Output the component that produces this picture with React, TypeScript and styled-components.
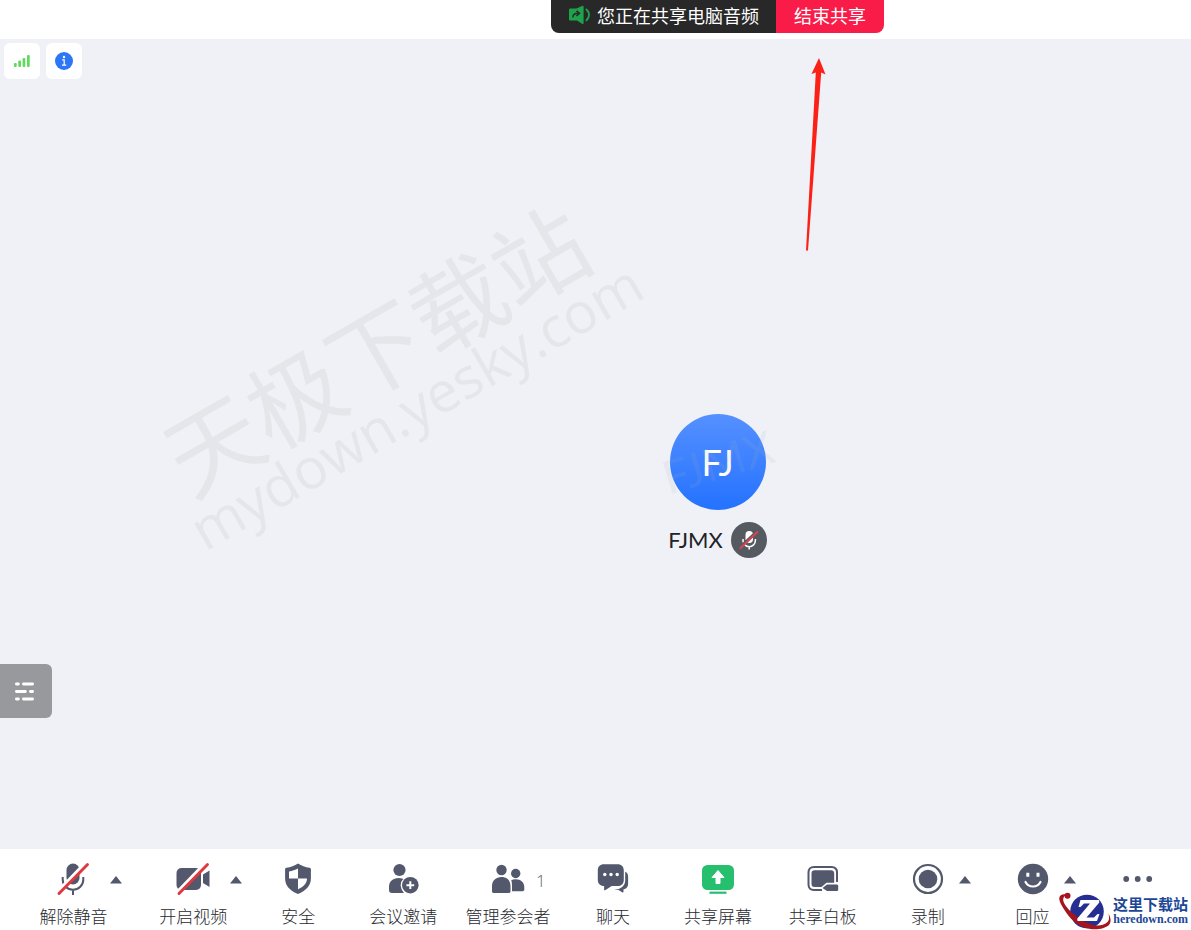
import React from "react";
import styled, { createGlobalStyle } from "styled-components";

const INK = "#53586d";

const GlobalStyle = createGlobalStyle`
  *, *::before, *::after { box-sizing: border-box; }
  body {
    margin: 0;
    overflow-x: hidden;
    background: #ffffff;
    font-family: "Open Sans", "Noto Sans CJK SC", sans-serif;
  }
  button {
    margin: 0;
    padding: 0;
    border: 0;
    background: none;
    font: inherit;
    color: inherit;
    cursor: pointer;
  }
  svg { display: block; }
`;

const Window = styled.div`
  position: relative;
  display: flex;
  flex-direction: column;
  min-height: 100vh;
`;

const Header = styled.header`
  display: flex;
  justify-content: center;
  align-items: flex-start;
  height: 39px;
  padding-left: 244px;
`;

const ShareBar = styled.div`
  display: flex;
  height: 33px;
  border-radius: 0 0 8px 8px;
  overflow: hidden;
  color: #ffffff;
  font-family: "Noto Sans CJK SC", sans-serif;
  font-size: 18px;
  line-height: 30px;
  white-space: nowrap;
`;

const ShareStatus = styled.div`
  display: flex;
  gap: 6px;
  padding: 0 17px 0 18px;
  background: #282828;

  svg { margin-top: 5px; }
`;

const StopButton = styled.button`
  && {
    display: flex;
    align-items: flex-start;
    padding: 0 18px;
    background: #f91c48;
    line-height: 30px;
  }
`;

const Stage = styled.main`
  position: relative;
  flex: 1;
  display: flex;
  flex-direction: column;
  background: #eff1f6;
`;

const StageTools = styled.div`
  display: flex;
  gap: 6px;
  padding: 4px 4px 0;
`;

const ToolButton = styled.button`
  && {
    display: grid;
    place-items: center;
    width: 36px;
    height: 36px;
    border-radius: 6px;
    background: #ffffff;
  }
`;

const Participants = styled.div`
  flex: 1;
  display: flex;
  justify-content: center;
  align-items: center;
  padding: 44px 0 0 244px;
`;

const Participant = styled.figure`
  display: flex;
  flex-direction: column;
  align-items: center;
  gap: 12px;
  margin: 0;
  font-family: Lato, "Noto Sans CJK SC", sans-serif;
`;

const Avatar = styled.div`
  position: relative;
  display: grid;
  place-items: center;
  width: 96px;
  height: 96px;
  border-radius: 50%;
  background: linear-gradient(#5590ff, #2472ff);
  color: #ffffff;
  font-size: 36px;
  line-height: 40px;
`;

const AvatarMark = styled.span`
  position: absolute;
  inset: 0;
  display: flex;
  justify-content: center;
  align-items: center;
  transform: rotate(-17deg);
  color: rgba(165, 175, 190, 0.15);
  font-size: 46px;
`;

const NameRow = styled.figcaption`
  display: flex;
  align-items: center;
  gap: 8px;
  color: #1f2329;
  font-size: 22px;
  line-height: 36px;
`;

const MutedBadge = styled.span`
  display: grid;
  place-items: center;
  width: 36px;
  height: 36px;
  border-radius: 50%;
  background: #555960;
`;

const DrawerButton = styled.button`
  && {
    position: absolute;
    left: 0;
    bottom: 131px;
    display: flex;
    align-items: center;
    width: 52px;
    height: 54px;
    padding-left: 14px;
    border-radius: 0 6px 6px 0;
    background: #98999c;
  }
`;

const Watermark = styled.div`
  position: absolute;
  left: 139px;
  top: 258px;
  width: 510px;
  transform: rotate(-30deg);
  color: #e5e6ea;
  text-align: center;
  white-space: nowrap;
  pointer-events: none;
`;

const WatermarkTitle = styled.div`
  padding-right: 12px;
  font-family: "Noto Sans CJK SC", sans-serif;
  font-size: 94px;
  line-height: 84px;
`;

const WatermarkSite = styled.div`
  padding-right: 4px;
  font-size: 56px;
  line-height: 60px;
`;

const PointerArrow = styled.svg`
  position: absolute;
  left: 800px;
  top: 56px;
  pointer-events: none;
`;

const Toolbar = styled.footer`
  display: flex;
  height: 81px;
  padding: 13px 1px 0 21px;
  background: #ffffff;
`;

const ToolbarItem = styled.div<{ $spaced?: boolean }>`
  flex: 1;
  display: grid;
  grid-template-columns: 1fr auto 1fr;
  align-items: start;
  column-gap: 3px;
  margin-right: ${(p) => (p.$spaced ? 15 : 0)}px;
`;

const ActionButton = styled.button`
  && {
    grid-column: 2;
    min-width: 52px;
    color: #26282e;
    font-family: "Noto Sans CJK SC", sans-serif;
    font-weight: 300;
    font-size: 17px;
    line-height: 24px;
    white-space: nowrap;
  }
`;

const IconRow = styled.span`
  display: grid;
  grid-template-columns: 1fr 34px 1fr;
  align-items: center;
  column-gap: 11px;
  height: 34px;
  margin-bottom: 8px;
`;

const IconSlot = styled.span`
  grid-column: 2;
`;

const Count = styled.span`
  justify-self: start;
  padding-top: 3px;
  color: #5c5f69;
  font-family: "Open Sans", sans-serif;
  font-size: 17px;
`;

const CaretButton = styled.button`
  && {
    display: flex;
    align-items: center;
    width: 12px;
    height: 34px;
  }
`;

const SiteBadge = styled.a`
  position: absolute;
  right: 3px;
  bottom: 0;
  display: flex;
  gap: 2px;
  color: #1d4796;
  text-decoration: none;
  white-space: nowrap;
`;

const SiteText = styled.span`
  display: flex;
  flex-direction: column;
  align-items: flex-end;
  padding-top: 5px;
`;

const SiteName = styled.span`
  font-family: "Noto Sans CJK SC", sans-serif;
  font-weight: 700;
  font-size: 15px;
  line-height: 18px;
`;

const SiteHost = styled.span`
  font-family: "Liberation Serif", serif;
  font-weight: 700;
  font-size: 12px;
  line-height: 12px;
`;

const Icon = ({ children }: { children: React.ReactNode }) => (
  <svg width="34" height="34" viewBox="0 0 34 34" fill={INK} aria-hidden="true">
    {children}
  </svg>
);

const Slash = () => (
  <>
    <path d="M1.500 30.500 29.800 1" stroke="#fff" strokeWidth="4" strokeLinecap="round" />
    <path d="M3 31.500 31.500 2.500" stroke="#e0383e" strokeWidth="2.900" strokeLinecap="round" />
  </>
);

const MicIcon = () => (
  <Icon>
    <rect x="10.500" y="1.500" width="13" height="21" rx="6.500" />
    <path d="M6.700 15v2.500a10.300 10.300 0 0 0 20.600 0V15M17 27.800v5.200" fill="none" stroke={INK} strokeWidth="2" />
    <Slash />
  </Icon>
);

const CameraIcon = () => (
  <Icon>
    <rect x="0.500" y="6" width="24.500" height="22" rx="5" />
    <path d="M27 12.500 33.500 8.500v16.500L27 21z" />
    <Slash />
  </Icon>
);

const ShieldIcon = () => (
  <Icon>
    <path d="M17 1.500c3.500 2.300 7.300 3.700 11.500 4.300 1 .2 1.400.7 1.400 1.700v9c0 7-5 12.300-12.900 15.500C9 28.800 4.100 23.500 4.100 16.500v-9c0-1 .4-1.500 1.400-1.700C9.700 5.200 13.500 3.800 17 1.500z" />
    <path d="M17 6.500V16.500H8V9.500c3.400-.6 6.300-1.500 9-3z M17 16.500h9c0 4.700-3.400 8.200-9 10.700z" fill="#fff" />
  </Icon>
);

const InviteIcon = () => (
  <Icon>
    <circle cx="13.500" cy="8" r="6.100" />
    <path d="M3 28v-3c0-5.500 3.800-9 9.500-9 2.600 0 4.700.7 6.200 1.900A9.400 9.400 0 0 0 18 31H6c-2 0-3-1-3-3z" />
    <circle cx="24.300" cy="23.200" r="9.600" fill="#fff" />
    <circle cx="24.300" cy="23.200" r="8.300" />
    <path d="M24.300 19.300v7.800M20.400 23.200h7.800" stroke="#fff" strokeWidth="2" />
  </Icon>
);

const MembersIcon = () => (
  <Icon>
    <circle cx="10.500" cy="8" r="5.200" />
    <path d="M1 29v-5c0-5.500 4-9 9.500-9s9 3.500 9 9v5c0 1.500-.6 2-2 2H3c-1.400 0-2-.5-2-2z" />
    <circle cx="24.700" cy="11.500" r="4.700" />
    <path d="M20.200 18.200c1.200-.5 2.700-.9 4.500-.9 5.200 0 8.600 3.200 8.600 8V27.500c0 1.200-.6 1.700-1.800 1.700H21v-5.500c0-2.200-.2-4-.8-5.500z" />
  </Icon>
);

const ChatIcon = () => (
  <Icon>
    <path d="M29.200 9.500c1.900 1 2.900 2.700 2.900 5.200v7c0 3.200-1.700 5.200-4.600 5.600v2.400c0 .8-.8 1.100-1.400.6L22.600 28h-4.500c3.800-.3 6-1.500 8-3 2.200-1.700 3.100-4 3.100-7z" />
    <path d="M8 2.300h13.500c4 0 6.300 2.300 6.300 6.300v9.100c0 4-2.300 6.300-6.300 6.300h-5.800l-6.200 4.100c-.8.500-1.400.1-1.400-.7V24c-4-.1-6.300-2.400-6.300-6.300V8.600c0-4 2.200-6.300 6.200-6.300z" />
    <circle cx="8.800" cy="12.500" r="1.700" fill="#fff" />
    <circle cx="15" cy="12.500" r="1.700" fill="#fff" />
    <circle cx="21.200" cy="12.500" r="1.700" fill="#fff" />
  </Icon>
);

const ShareScreenIcon = () => (
  <Icon>
    <rect x="1" y="3" width="32" height="25" rx="5.500" fill="#26bf6d" />
    <path d="M8.500 30.700h17" stroke="#26bf6d" strokeWidth="2.200" />
    <path d="M17 8.500 23 15.500h-4v6h-4v-6h-4z" fill="#fff" stroke="#fff" strokeLinejoin="round" />
  </Icon>
);

const WhiteboardIcon = () => (
  <Icon>
    <path d="M16 28H8c-3.600 0-5.500-1.900-5.500-5.500V10.500C2.500 6.900 4.400 5 8 5h17.500c3.600 0 5.500 1.900 5.500 5.500V20" fill="none" stroke={INK} strokeWidth="2" />
    <path d="M8.700 8.200H25c2 0 3.200 1.100 3.200 3.200v9.300h-7.700l-5 4.200H8.700c-2.200 0-3.200-1.100-3.200-3.200V11.400c0-2.100 1-3.200 3.200-3.200z" />
    <path d="M16.500 25.900l4.500-3.400h9.500c1.100 0 1.700.6 1.700 1.700v3.300c0 1.100-.6 1.500-1.700 1.500H21z" />
  </Icon>
);

const RecordIcon = () => (
  <Icon>
    <circle cx="17" cy="17" r="14" fill="none" stroke={INK} strokeWidth="2.200" />
    <circle cx="17" cy="17" r="9.300" />
  </Icon>
);

const ReactionIcon = () => (
  <Icon>
    <circle cx="17" cy="17" r="15.200" />
    <path d="M11.800 10.700v4M22 10.700v4" stroke="#fff" strokeWidth="3" />
    <path d="M9.500 20c1.600 3 4.200 4.500 7.500 4.500s5.900-1.500 7.500-4.500" fill="none" stroke="#fff" strokeWidth="2.200" strokeLinecap="round" />
  </Icon>
);

const MoreIcon = () => (
  <Icon>
    <circle cx="5.200" cy="17" r="2.900" />
    <circle cx="16.700" cy="17" r="2.900" />
    <circle cx="28.200" cy="17" r="2.900" />
  </Icon>
);

const Caret = () => (
  <svg width="12" height="34" viewBox="0 0 12 34" fill={INK} aria-hidden="true">
    <path d="M6 14 12 21.500H0z" />
  </svg>
);

const SpeakerIcon = () => (
  <svg width="22" height="20" viewBox="0 0 22 20" aria-hidden="true">
    <path d="M1.500 3.500h6L13 1c1-.4 1.600 0 1.600 1v16c0 1-.6 1.300-1.600.8L8 15.500H1.500C.6 15.500 0 15 0 14V5c0-1 .6-1.500 1.500-1.500z" fill="#1fa24c" />
    <path d="M3.800 12.500c.2-3 1.800-4.300 5-4.300M7.500 5.800l3 2.500-3 2.700" fill="none" stroke="#282828" strokeWidth="1.500" />
    <path d="M17.500 4.500c3.300 3.300 3.300 7.500 0 10.800" fill="none" stroke="#1fa24c" strokeWidth="2" strokeLinecap="round" />
  </svg>
);

const SignalIcon = () => (
  <svg width="16" height="14" viewBox="0 0 16 14" fill="#5fda5f" aria-hidden="true">
    <rect x="0" y="9" width="2.700" height="4" rx="1" />
    <rect x="4.300" y="6.500" width="2.700" height="6.500" rx="1" />
    <rect x="8.600" y="4" width="2.700" height="9" rx="1" />
    <rect x="13" y="1" width="2.700" height="12" rx="1" />
  </svg>
);

const InfoIcon = () => (
  <svg width="18" height="18" viewBox="0 0 18 18" aria-hidden="true">
    <circle cx="9" cy="9" r="9" fill="#2d76f6" />
    <circle cx="9" cy="5" r="1.200" fill="#fff" />
    <path d="M7.200 7.800h2V13M7 13.200h4.200" fill="none" stroke="#fff" strokeWidth="1.200" />
  </svg>
);

const SmallMutedIcon = () => (
  <svg width="20" height="22" viewBox="0 0 20 22" aria-hidden="true">
    <rect x="6.500" y="2" width="7.500" height="12" rx="3.700" fill="#fff" />
    <path d="M4 10v1.500a6.200 6.200 0 0 0 12.400 0V10M10.200 17.700v2.800" fill="none" stroke="#fff" strokeWidth="1.500" />
    <path d="M1.200 18 18 2.500" stroke="#555960" strokeWidth="3" />
    <path d="M1.500 19 18.500 3" stroke="#d8444f" strokeWidth="2" strokeLinecap="round" />
  </svg>
);

const ListIcon = () => (
  <svg width="21" height="20" viewBox="0 0 21 20" stroke="#fff" strokeWidth="2.800" strokeLinecap="round" aria-hidden="true">
    <path d="M2.400 3h2M9.400 3h9.200M2.400 10.500h9M16.400 10.500h2.200M2.400 18h2M9.400 18h9.200" />
  </svg>
);

const SiteLogo = () => (
  <svg width="54" height="40" viewBox="0 0 54 40" aria-hidden="true">
    <circle cx="30" cy="21.500" r="16.800" fill="#252f92" />
    <path d="M10 4.500C2 3 0 8 5 16c5 9 12 17.500 22 21.500 9 3.200 20 2 25-2.500 2.500-3 1.800-7.500-.5-11.500 1 4.500.8 7-1.500 9-4 3.500-11 4-17 1.500C22 30 9 19 6.500 11.500 5.500 8 7 6 10 4.500z" fill="#a5151d" />
    <circle cx="10.500" cy="5.800" r="3" fill="#a5151d" />
    <path d="M23.500 10h18.500l.3 2.500L29.500 27.500h7.500l3.500-3.500h2l-2.500 7H20.500l-.3-2.300L33 13.500h-6l-3.500 3.500h-2z" fill="#fff" />
  </svg>
);

type Action = {
  label: string;
  icon: React.ReactNode;
  menu?: string;
  count?: number;
  spaced?: boolean;
};

const ACTIONS: Action[] = [
  { label: "解除静音", icon: <MicIcon />, menu: "音频选项", spaced: true },
  { label: "开启视频", icon: <CameraIcon />, menu: "视频选项" },
  { label: "安全", icon: <ShieldIcon /> },
  { label: "会议邀请", icon: <InviteIcon /> },
  { label: "管理参会者", icon: <MembersIcon />, count: 1 },
  { label: "聊天", icon: <ChatIcon /> },
  { label: "共享屏幕", icon: <ShareScreenIcon /> },
  { label: "共享白板", icon: <WhiteboardIcon /> },
  { label: "录制", icon: <RecordIcon />, menu: "录制选项" },
  { label: "回应", icon: <ReactionIcon />, menu: "回应选项" },
  { label: "", icon: <MoreIcon /> },
];

export default function App() {
  return (
    <Window>
      <GlobalStyle />
      <Header>
        <ShareBar>
          <ShareStatus>
            <SpeakerIcon />
            <span>您正在共享电脑音频</span>
          </ShareStatus>
          <StopButton type="button">结束共享</StopButton>
        </ShareBar>
      </Header>

      <Stage>
        <StageTools>
          <ToolButton type="button" aria-label="网络状态">
            <SignalIcon />
          </ToolButton>
          <ToolButton type="button" aria-label="会议信息">
            <InfoIcon />
          </ToolButton>
        </StageTools>
        <Participants>
          <Participant>
            <Avatar>
              FJ
              <AvatarMark>FJMX</AvatarMark>
            </Avatar>
            <NameRow>
              FJMX
              <MutedBadge>
                <SmallMutedIcon />
              </MutedBadge>
            </NameRow>
          </Participant>
        </Participants>
        <DrawerButton type="button" aria-label="展开列表">
          <ListIcon />
        </DrawerButton>
        <Watermark>
          <WatermarkTitle>天极下载站</WatermarkTitle>
          <WatermarkSite>mydown.yesky.com</WatermarkSite>
        </Watermark>
      </Stage>

      <Toolbar>
        {ACTIONS.map((action, index) => (
          <ToolbarItem key={index} $spaced={action.spaced}>
            <ActionButton type="button" aria-label={action.label || "更多"}>
              <IconRow>
                <IconSlot>{action.icon}</IconSlot>
                {action.count !== undefined && <Count>{action.count}</Count>}
              </IconRow>
              {action.label}
            </ActionButton>
            {action.menu && (
              <CaretButton type="button" aria-label={action.menu}>
                <Caret />
              </CaretButton>
            )}
          </ToolbarItem>
        ))}
      </Toolbar>

      <PointerArrow width="30" height="196" viewBox="0 0 30 196" aria-hidden="true">
        <path d="M19 2 25.500 18.500 21.200 16.500 8 194.500H6L15.800 16.500 11.500 18z" fill="#fb2116" />
      </PointerArrow>
      <SiteBadge href="#">
        <SiteLogo />
        <SiteText>
          <SiteName>这里下载站</SiteName>
          <SiteHost>heredown.com</SiteHost>
        </SiteText>
      </SiteBadge>
    </Window>
  );
}
